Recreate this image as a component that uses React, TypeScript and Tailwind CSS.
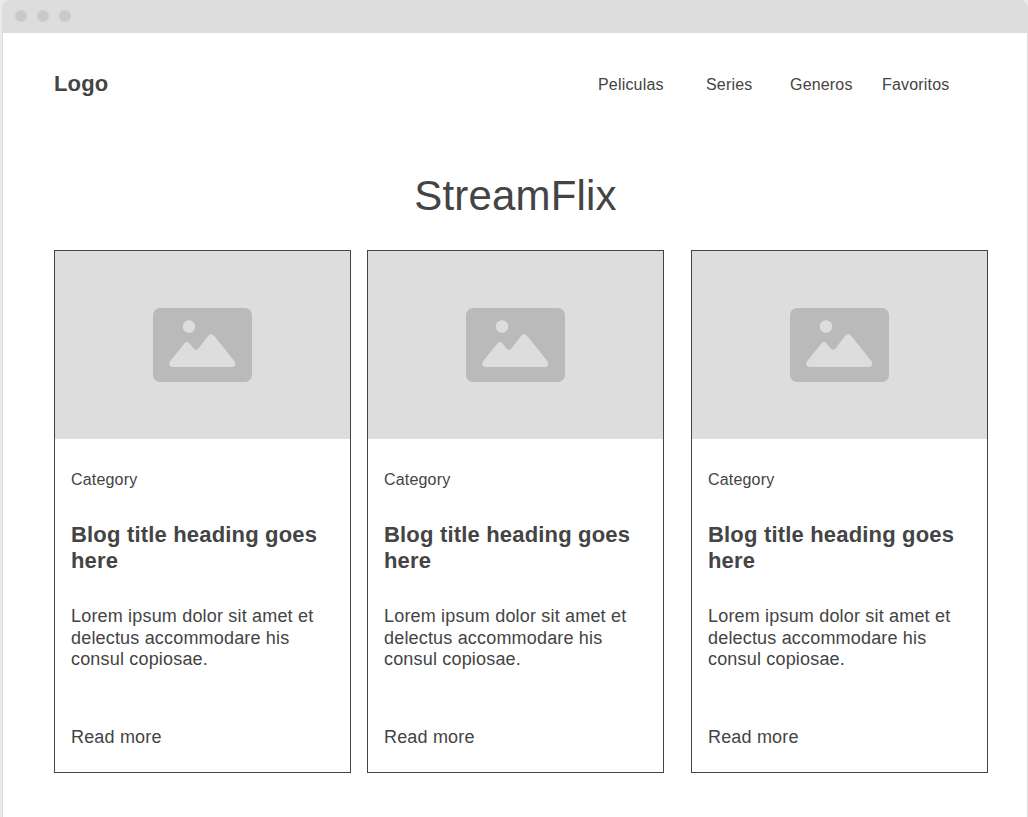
const links = [
  { label: "Peliculas", width: "w-[108px]" },
  { label: "Series", width: "w-[84px]" },
  { label: "Generos", width: "w-[92px]" },
  { label: "Favoritos", width: "w-[72px]" },
];

const cards = [
  { id: 1, spacing: "" },
  { id: 2, spacing: "ml-4" },
  { id: 3, spacing: "ml-[27px]" },
];

function ImagePlaceholder() {
  return (
    <svg width="99" height="74" viewBox="0 0 99 74" aria-hidden="true">
      <rect width="99" height="74" rx="7" fill="#bababa" />
      <circle cx="36" cy="18.5" r="6.3" fill="#dddddd" />
      <path
        d="M17 53.2 L31.4 35.4 Q34 32.6 36.7 35.4 L40.6 40.4 Q43 43.2 45.4 40.4 L55.5 27.6 Q58.2 24.4 60.9 27.6 L81.5 53.2 Q84 58.8 78.5 59.1 H20 Q14.5 58.5 17 53.2 Z"
        fill="#dddddd"
      />
    </svg>
  );
}

function BlogCard({ spacing }: { spacing: string }) {
  return (
    <article className={`h-[523px] w-[297px] shrink-0 border border-[#444444] ${spacing}`}>
      <div className="flex h-[188px] items-center justify-center bg-[#dddddd]">
        <ImagePlaceholder />
      </div>
      <div className="px-4 pt-[31px]">
        <p className="text-[16px] leading-[19px]">Category</p>
        <h2 className="mt-[33px] text-[22px] leading-[26px] font-bold">
          Blog title heading goes here
        </h2>
        <p className="mt-[32px] text-[18px] leading-[21.6px]">
          Lorem ipsum dolor sit amet et delectus accommodare his consul copiosae.
        </p>
        <a href="#" className="mt-[55px] block text-[18px] leading-[22px]">
          Read more
        </a>
      </div>
    </article>
  );
}

export default function App() {
  return (
    <div className="h-[817px] w-[1028px] overflow-hidden bg-[#ebebeb] pl-[2px] font-['Liberation_Sans',Arial,sans-serif] tracking-[0.18px] text-[#444444]">
      <div className="h-full overflow-hidden rounded-t-[8px] bg-[#dddddd]">
        <div className="flex h-[33px] items-center gap-[10px] pb-[1px] pl-[13px]">
          <span className="size-3 rounded-full bg-[#cacaca]" />
          <span className="size-3 rounded-full bg-[#cacaca]" />
          <span className="size-3 rounded-full bg-[#cacaca]" />
        </div>
        <main className="mx-px h-[784px] bg-white pl-[51px]">
          <header className="flex h-[102px] items-center">
            <div className="w-[544px] text-[22px] leading-[26px] font-bold">Logo</div>
            <nav className="flex text-[16px] leading-[19px]">
              {links.map((link) => (
                <a key={link.label} href="#" className={`shrink-0 ${link.width}`}>
                  {link.label}
                </a>
              ))}
            </nav>
          </header>
          <h1 className="mt-[36px] w-[923px] text-center text-[42px] leading-[50px]">StreamFlix</h1>
          <section className="mt-[29px] flex">
            {cards.map((card) => (
              <BlogCard key={card.id} spacing={card.spacing} />
            ))}
          </section>
        </main>
      </div>
    </div>
  );
}
